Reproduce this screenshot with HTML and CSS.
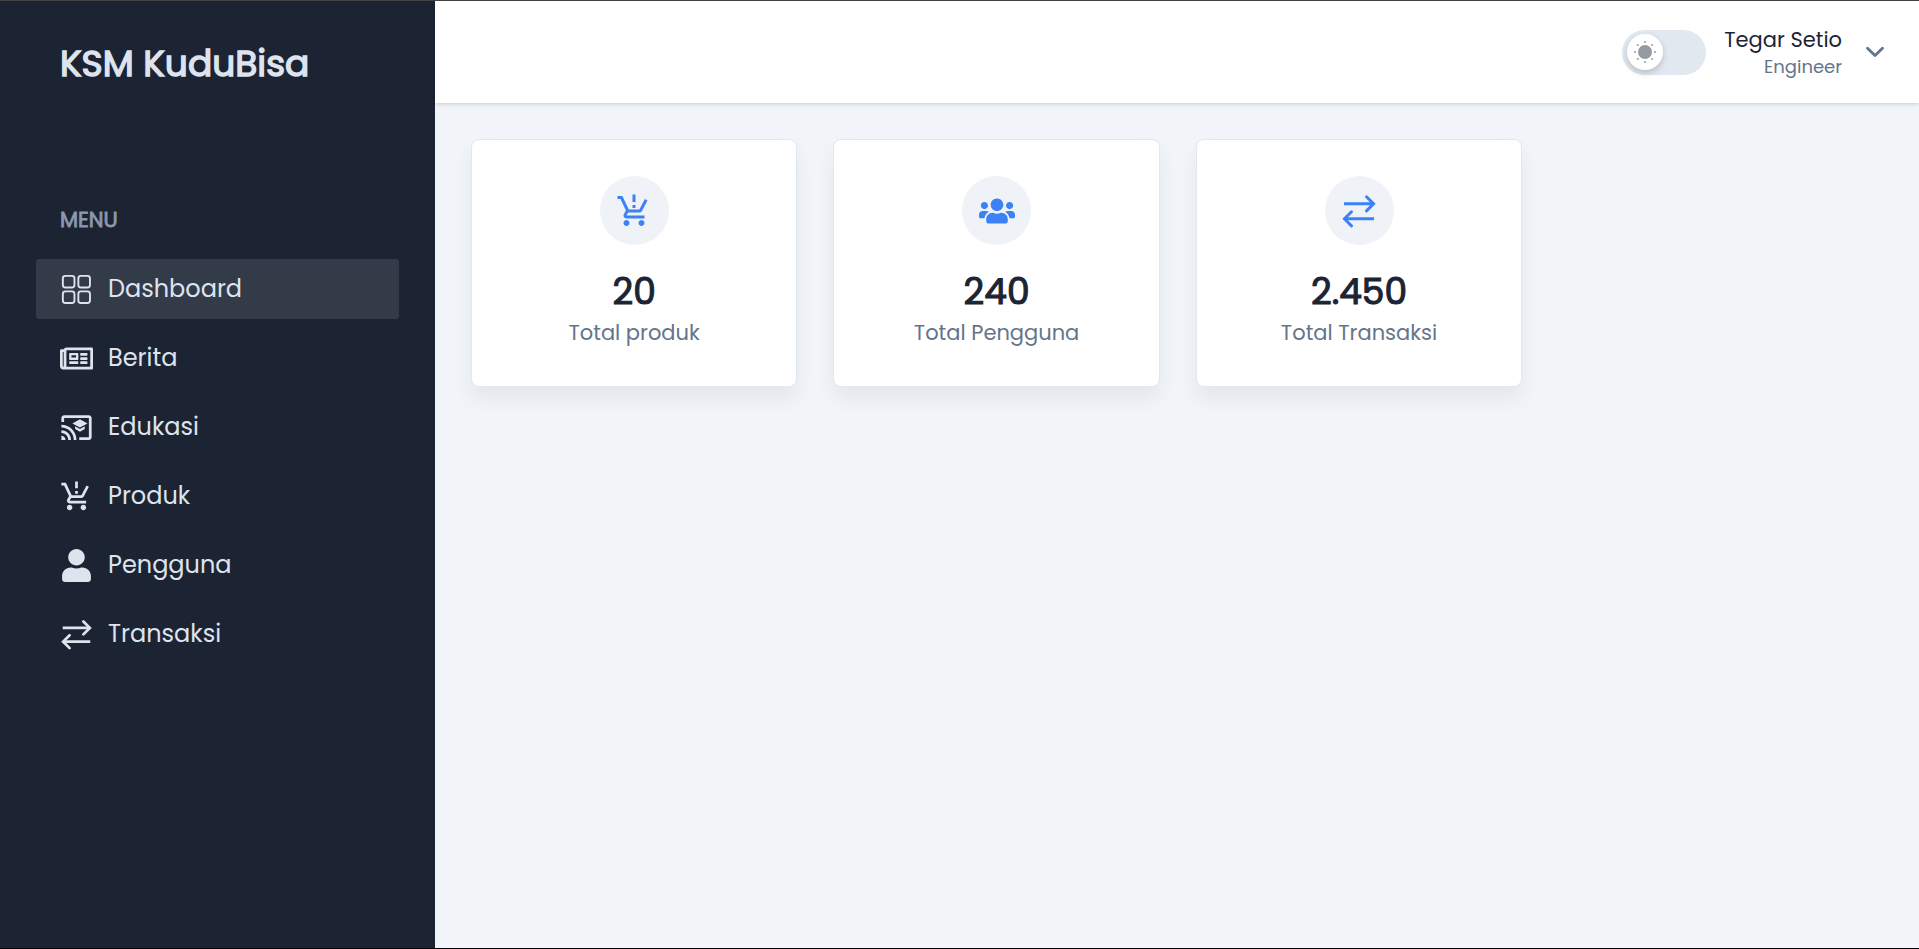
FILE: index.html
```html
<!DOCTYPE html>
<html lang="id">
<head>
<meta charset="utf-8">
<title>KSM KuduBisa</title>
<link rel="stylesheet" href="styles.css">
</head>
<body>
<svg class="sprite" aria-hidden="true">
  <symbol id="cart" viewBox="0 0 24 24"><path d="M13 10h-2V8h2v2zm0-4h-2V1h2v5zM7 18c-1.100 0-1.990.9-1.990 2S5.900 22 7 22s2-.9 2-2-.9-2-2-2zm10 0c-1.100 0-1.990.9-1.990 2s.89 2 1.990 2 2-.9 2-2-.9-2-2-2zm-8.900-5h7.450c.75 0 1.410-.41 1.750-1.030L21 4.960 19.250 4l-3.700 7H8.530L4.270 2H1v2h2l3.600 7.590-1.350 2.440C4.520 15.370 5.480 17 7 17h12v-2H7l1.100-2z"/></symbol>
  <symbol id="exchange" viewBox="0 0 24 24"><g fill="none" stroke="currentColor" stroke-width="2"><path d="M2 7.200h19M22 17.200H3"/><path d="M17 2.500l4.700 4.700-4.700 4.700M7 12.500l-4.700 4.700L7 21.900" stroke-linecap="round"/></g></symbol>
</svg>
<div class="page">
  <aside class="sidebar">
    <h1 class="brand">KSM KuduBisa</h1>
    <h2 class="menu-title">MENU</h2>
    <nav class="menu">
      <a class="item active"><svg class="icon" viewBox="0 0 33 33"><g fill="none" stroke="currentColor" stroke-width="1.900"><rect x="2.850" y="2.850" width="11.600" height="11.600" rx="2.500"/><rect x="18.350" y="2.850" width="11.600" height="11.600" rx="2.500"/><rect x="2.850" y="18.350" width="11.600" height="11.600" rx="2.500"/><rect x="18.350" y="18.350" width="11.600" height="11.600" rx="2.500"/></g></svg><span class="text">Dashboard</span></a>
      <a class="item"><svg class="icon" viewBox="0 0 576 512"><path d="M552 64H112c-20.858 0-38.643 13.377-45.248 32H24c-13.255 0-24 10.745-24 24v272c0 30.928 25.072 56 56 56h496c13.255 0 24-10.745 24-24V88c0-13.255-10.745-24-24-24zM48 392V144h16v248c0 4.411-3.589 8-8 8s-8-3.589-8-8zm480 8H111.422c.374-2.614.578-5.283.578-8V112h416v288zM172 280h136c6.627 0 12-5.373 12-12v-96c0-6.627-5.373-12-12-12H172c-6.627 0-12 5.373-12 12v96c0 6.627 5.373 12 12 12zm28-80h80v40h-80v-40zm-40 140v-24c0-6.627 5.373-12 12-12h136c6.627 0 12 5.373 12 12v24c0 6.627-5.373 12-12 12H172c-6.627 0-12-5.373-12-12zm192 0v-24c0-6.627 5.373-12 12-12h104c6.627 0 12 5.373 12 12v24c0 6.627-5.373 12-12 12H364c-6.627 0-12-5.373-12-12zm0-144v-24c0-6.627 5.373-12 12-12h104c6.627 0 12 5.373 12 12v24c0 6.627-5.373 12-12 12H364c-6.627 0-12-5.373-12-12zm0 72v-24c0-6.627 5.373-12 12-12h104c6.627 0 12 5.373 12 12v24c0 6.627-5.373 12-12 12H364c-6.627 0-12-5.373-12-12z"/></svg><span class="text">Berita</span></a>
      <a class="item"><svg class="icon" viewBox="0 0 24 24"><path d="M21 3H3c-1.100 0-2 .9-2 2v3h2V5h18v14h-7v2h7c1.100 0 2-.9 2-2V5c0-1.100-.9-2-2-2zM1 18v3h3c0-1.660-1.340-3-3-3zm0-4v2c2.760 0 5 2.240 5 5h2c0-3.870-3.130-7-7-7zm0-4v2c4.970 0 9 4.030 9 9h2c0-6.080-4.930-11-11-11zm10 1.090v2L14.500 15l3.500-1.910v-2L14.500 13 11 11.090zM14.500 6L9 9l5.500 3L20 9l-5.500-3z"/></svg><span class="text">Edukasi</span></a>
      <a class="item"><svg class="icon"><use href="#cart"/></svg><span class="text">Produk</span></a>
      <a class="item"><svg class="icon" viewBox="0 0 448 512"><path d="M224 256c70.700 0 128-57.300 128-128S294.700 0 224 0 96 57.300 96 128s57.300 128 128 128zm89.600 32h-16.700c-22.200 10.200-46.900 16-72.900 16s-50.600-5.800-72.900-16h-16.700C60.200 288 0 348.200 0 422.400V464c0 26.500 21.500 48 48 48h352c26.500 0 48-21.500 48-48v-41.600c0-74.200-60.200-134.400-134.400-134.400z"/></svg><span class="text">Pengguna</span></a>
      <a class="item"><svg class="icon"><use href="#exchange"/></svg><span class="text">Transaksi</span></a>
    </nav>
  </aside>
  <div class="content">
    <header class="topbar">
      <div class="toggle"><span class="knob"><svg class="sun" viewBox="0 0 24 24"><circle cx="12" cy="12" r="7"/><circle cx="12" cy="2" r="1"/><circle cx="12" cy="22" r="1"/><circle cx="2" cy="12" r="1"/><circle cx="22" cy="12" r="1"/><circle cx="4.900" cy="4.900" r="1"/><circle cx="19.100" cy="4.900" r="1"/><circle cx="4.900" cy="19.100" r="1"/><circle cx="19.100" cy="19.100" r="1"/></svg></span></div>
      <div class="user"><span class="name">Tegar Setio</span><span class="role">Engineer</span></div>
      <svg class="chevron" viewBox="0 0 18 12"><path d="M1.500 2.300L9 9.600 16.500 2.300" fill="none" stroke="currentColor" stroke-width="2.800" stroke-linecap="round" stroke-linejoin="round"/></svg>
    </header>
    <main class="cards">
      <section class="card"><div class="badge"><svg class="card-icon"><use href="#cart"/></svg></div><div class="value">20</div><div class="label">Total produk</div></section>
      <section class="card"><div class="badge"><svg class="card-icon" viewBox="0 0 640 512"><path d="M96 224c35.300 0 64-28.700 64-64s-28.700-64-64-64-64 28.700-64 64 28.700 64 64 64zm448 0c35.300 0 64-28.700 64-64s-28.700-64-64-64-64 28.700-64 64 28.700 64 64 64zm32 32h-64c-17.600 0-33.500 7.100-45.100 18.600 40.300 22.100 68.900 62 75.100 109.400h66c17.700 0 32-14.300 32-32v-32c0-35.300-28.700-64-64-64zm-256 0c61.900 0 112-50.100 112-112S381.900 32 320 32 208 82.100 208 144s50.100 112 112 112zm76.800 32h-8.300c-20.800 10-43.900 16-68.500 16s-47.600-6-68.500-16h-8.300C179.600 288 128 339.600 128 403.200V432c0 26.500 21.500 48 48 48h288c26.500 0 48-21.500 48-48v-28.800c0-63.600-51.600-115.200-115.200-115.200zm-223.700-13.400C161.500 263.100 145.600 256 128 256H64c-35.300 0-64 28.700-64 64v32c0 17.700 14.300 32 32 32h65.900c6.300-47.400 34.900-87.300 75.200-109.400z"/></svg></div><div class="value">240</div><div class="label">Total Pengguna</div></section>
      <section class="card"><div class="badge"><svg class="card-icon"><use href="#exchange"/></svg></div><div class="value">2.450</div><div class="label">Total Transaksi</div></section>
    </main>
  </div>
</div>
</body>
</html>
```
FILE: styles.css
```css
* { box-sizing: border-box; }
body { margin: 0; font-family: Poppins, Inter, sans-serif; background: #f1f5f9; }
.sprite { position: absolute; width: 0; height: 0; }
.page { display: flex; height: 949px; border-top: 1px solid #444; border-bottom: 1px solid #000; }
.sidebar { width: 435px; flex: none; background: #1c2434; color: #dee4ee; padding: 36px 36px 0; }
.brand { margin: 0; padding-left: 24px; font-size: 36px; line-height: 54px; font-weight: 400; -webkit-text-stroke: 1.400px currentColor; }
.menu-title { margin: 113px 0 23px; padding-left: 24px; font-size: 21px; line-height: 32px; font-weight: 400; -webkit-text-stroke: .8px currentColor; color: #8a99af; }
.menu { display: flex; flex-direction: column; gap: 9px; }
.item { height: 60px; padding: 0 24px; display: flex; align-items: center; gap: 15px; border-radius: 3px; font-size: 24px; }
.item .text { margin-top: -1px; }
.active { background: #333a48; }
.icon { width: 33px; height: 33px; fill: currentColor; }
.content { flex: 1; }
.topbar { height: 102px; background: #fff; box-shadow: 0 1px 4px rgba(0,0,0,.17); display: flex; justify-content: flex-end; align-items: center; padding-right: 35px; }
.toggle { width: 84px; height: 45px; border-radius: 23px; background: #e2e8f0; padding: 4px 5px; margin-right: 18px; }
.knob { display: flex; align-items: center; justify-content: center; width: 36px; height: 36px; border-radius: 50%; background: #fff; box-shadow: 0 3px 6px rgba(0,0,0,.18); }
.sun { width: 24px; height: 24px; fill: #969aa1; }
.user { display: flex; flex-direction: column; align-items: flex-end; margin-right: 24px; font-weight: 400; }
.name { font-size: 21px; line-height: 30px; color: #1c2434; }
.role { font-size: 18px; line-height: 24px; color: #64748b; }
.chevron { width: 18px; height: 12px; color: #64748b; }
.cards { display: grid; grid-template-columns: repeat(4, 1fr); gap: 36.200px; padding: 36px 34.400px 36px 36px; }
.card { height: 248px; border: 1px solid #e2e8f0; border-radius: 8px; background: #fff; padding-top: 36px; display: flex; flex-direction: column; align-items: center; box-shadow: 0 12px 20px rgba(0,0,0,.06); }
.badge { width: 69px; height: 69px; border-radius: 50%; background: #eff2f7; color: #3c82f6; display: flex; align-items: center; justify-content: center; }
.card-icon { width: 36px; height: 36px; fill: currentColor; }
.value { margin-top: 24px; font-size: 36px; line-height: 45px; font-weight: 400; -webkit-text-stroke: 1.100px currentColor; color: #1c2434; }
.label { font-size: 21px; line-height: 38px; font-weight: 400; color: #64748b; }
```
